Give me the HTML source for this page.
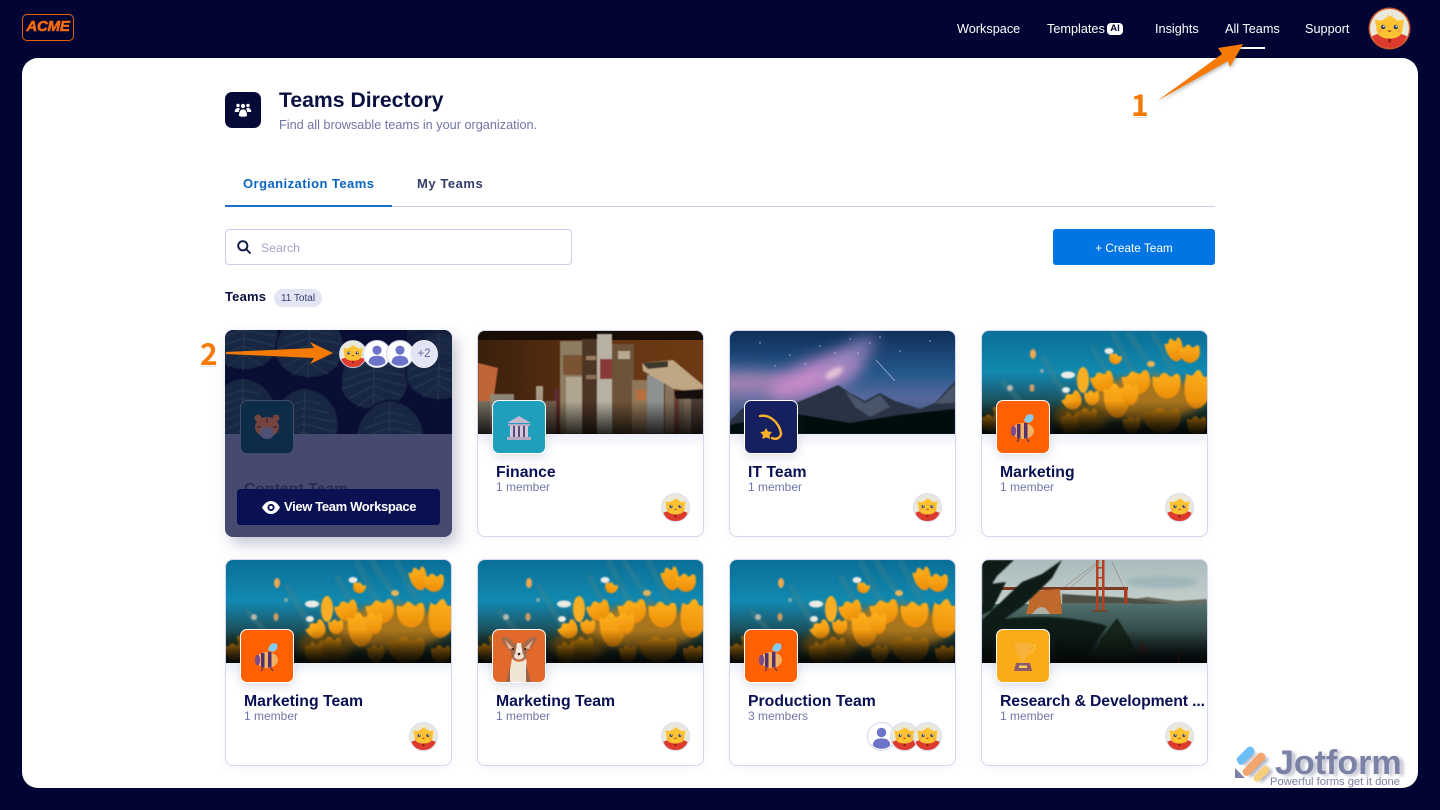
<!DOCTYPE html>
<html lang="en"><head><meta charset="utf-8"><title>Teams Directory</title>
<style>
*{box-sizing:border-box}
html,body{margin:0;padding:0;width:1440px;height:810px;overflow:hidden;background:#020534;font-family:"Liberation Sans",sans-serif}
.a{position:absolute}
.nav{position:absolute;top:21px;color:#fff;font-size:12.7px;line-height:16px;white-space:nowrap}
.main{position:absolute;left:22px;top:58px;width:1396px;height:730px;background:#fff;border-radius:16px}
.card{position:absolute;width:227px;height:207px;background:#fff;border:1px solid #d3d7f0;border-radius:8px;box-shadow:0 2px 10px rgba(90,100,170,.06);overflow:hidden}
.card svg.b{position:absolute;left:0;top:0;width:225px;height:103px;display:block}
.sh{position:absolute;left:0;top:103px;width:225px;height:14px;background:linear-gradient(#eef0f8,#fff)}
.ico{position:absolute;left:14px;top:69px;width:54px;height:54px;border:1px solid #fff;border-radius:7px;overflow:hidden;box-shadow:0 3px 10px rgba(60,70,130,.18)}
.ico svg{display:block;width:52px;height:52px}
.t{position:absolute;left:18px;top:132px;font-size:15.8px;line-height:20px;font-weight:bold;color:#0a1153;white-space:nowrap}
.s{position:absolute;left:18px;top:149px;font-size:12px;line-height:14px;color:#6f76a7;white-space:nowrap}
.av{position:absolute;width:29px;height:29px}
.num{position:absolute;font-family:"Noto Sans CJK JP","Liberation Sans",sans-serif;font-size:30px;font-weight:700;line-height:32px;color:#f57a05;text-shadow:-1px 0 #fff,1px 0 #fff,0 -1px #fff,0 1px #fff,-1px 1px #e8e8e8,0 2px #e2e2e2}
</style></head><body>
<svg width="0" height="0" style="position:absolute">
<defs>
<filter id="bl05" x="-30%" y="-30%" width="160%" height="160%"><feGaussianBlur stdDeviation=".5"/></filter>
<filter id="bl1" x="-30%" y="-30%" width="160%" height="160%"><feGaussianBlur stdDeviation=".8"/></filter>
<filter id="bl2" x="-50%" y="-50%" width="200%" height="200%"><feGaussianBlur stdDeviation="2"/></filter>
<filter id="bl4" x="-50%" y="-80%" width="200%" height="260%"><feGaussianBlur stdDeviation="4"/></filter>
<filter id="bl6" x="-100%" y="-200%" width="300%" height="500%"><feGaussianBlur stdDeviation="8"/></filter>
<filter id="sd" x="-20%" y="-20%" width="140%" height="150%"><feGaussianBlur stdDeviation="1.6"/></filter>
<linearGradient id="sky" x1="0" y1="0" x2="0" y2="1"><stop offset="0" stop-color="#0a6f98"/><stop offset=".4" stop-color="#1189b0"/><stop offset=".6" stop-color="#1a6177"/><stop offset=".8" stop-color="#1c3a34"/><stop offset="1" stop-color="#0e1c18"/></linearGradient>
<linearGradient id="fade" x1="0" y1="0" x2="0" y2="1"><stop offset=".68" stop-color="#000" stop-opacity="0"/><stop offset="1" stop-color="#000" stop-opacity=".8"/></linearGradient>
<linearGradient id="ngt" x1="0" y1="0" x2="0" y2="1"><stop offset="0" stop-color="#0f2f58"/><stop offset=".4" stop-color="#24568a"/><stop offset=".65" stop-color="#56699c"/><stop offset="1" stop-color="#39496a"/></linearGradient>
<linearGradient id="brg" x1="0" y1="0" x2="0" y2="1"><stop offset="0" stop-color="#a9bcbd"/><stop offset="1" stop-color="#c6d0cd"/></linearGradient>
<linearGradient id="wat" x1="0" y1="0" x2="0" y2="1"><stop offset="0" stop-color="#52706d"/><stop offset=".6" stop-color="#2a403f"/><stop offset="1" stop-color="#0b1414"/></linearGradient>
<linearGradient id="tg" x1="0" y1="0" x2="0" y2="1"><stop offset="0" stop-color="#fdb01c"/><stop offset="1" stop-color="#ec8c08"/></linearGradient>
<linearGradient id="tg2" x1="0" y1="0" x2="0" y2="1"><stop offset="0" stop-color="#d98b0e"/><stop offset="1" stop-color="#4a3a12"/></linearGradient>
<linearGradient id="wd" x1="0" y1="0" x2="1" y2="0"><stop offset="0" stop-color="#3a1f0c"/><stop offset=".6" stop-color="#653512"/><stop offset="1" stop-color="#6d3a14"/></linearGradient>
<path id="tp" d="M-11 -8Q-6 -6 -5 -9Q-2 -13 1 -9Q4 -6 6 -10Q9 -11 10 -8Q12 4 5 9Q0 12 -5 9Q-12 4 -11 -8Z" fill="url(#tg)"/>
<path id="td" d="M-11 -8Q-6 -6 -5 -9Q-2 -13 1 -9Q4 -6 6 -10Q9 -11 10 -8Q12 4 5 9Q0 12 -5 9Q-12 4 -11 -8Z" fill="url(#tg2)"/>
<symbol id="cat" viewBox="0 0 40 40">
<circle cx="20" cy="20" r="20" fill="#e9e8da"/>
<path d="M2 28 Q9 24 20 25 Q31 24 38 28 Q33 40 20 40 Q7 40 2 28Z" fill="#dc3b2d"/>
<path d="M5 11 L12 12 Q15 9 18 9 L18 6 L21 8 L23 6 L23 9 Q26 9 28 12 L35 11 L33.500 19 Q34 30 20 30.500 Q6 30 6.500 19Z" fill="#fcc232"/>
<circle cx="13.500" cy="18.500" r="2.300" fill="#3a3f6b"/><circle cx="26.500" cy="18.500" r="2.300" fill="#3a3f6b"/>
<circle cx="14.200" cy="17.800" r=".9" fill="#fff"/><circle cx="27.200" cy="17.800" r=".9" fill="#fff"/>
<path d="M17.500 22 Q20 25 22.500 22Z" fill="#8a3a1c"/>
<circle cx="10" cy="22.500" r="1.500" fill="#f6a645"/><circle cx="30" cy="22.500" r="1.500" fill="#f6a645"/>
<path d="M18 30.500h4l-1 4h-2z" fill="#9a2015"/>
</symbol>
<symbol id="usr" viewBox="0 0 40 40">
<circle cx="20" cy="20" r="19.300" fill="#fff" stroke="#d3d7f0" stroke-width="1.400"/>
<circle cx="20" cy="14.500" r="6.500" fill="#6c73c8"/>
<path d="M8 32.500 C8 25 13 22.500 20 22.500 C27 22.500 32 25 32 32.500 Q27 37 20 37 Q13 37 8 32.500Z" fill="#6c73c8"/>
</symbol>
<symbol id="catb" viewBox="0 0 42 42">
<circle cx="21" cy="21" r="20.200" fill="#fff" stroke="#d3d7f0" stroke-width="1.400"/>
<svg x="1.500" y="1.500" width="39" height="39" viewBox="0 0 40 40"><use href="#cat"/></svg>
</symbol>
<symbol id="flw" viewBox="0 0 225 103" preserveAspectRatio="none">
<rect width="225" height="103" fill="url(#sky)"/>
<g filter="url(#bl2)" stroke="#4d8486" stroke-width="2.500" opacity=".8" fill="none"><path d="M130 0L165 70M145 0L185 60M170 0L190 40M60 25L95 85M20 50L60 95M90 40L120 90M110 15L135 60"/></g>
<g filter="url(#bl4)"><ellipse cx="165" cy="68" rx="55" ry="22" fill="#a8741a"/><ellipse cx="100" cy="86" rx="28" ry="14" fill="#7c5c18"/><ellipse cx="30" cy="92" rx="30" ry="12" fill="#3b3c1e"/></g>
<g filter="url(#bl1)">
<g fill="#ecece6"><ellipse cx="86" cy="44" rx="7" ry="3.500"/><ellipse cx="127" cy="20" rx="4.500" ry="3"/><ellipse cx="84" cy="59" rx="4" ry="3"/><ellipse cx="28" cy="57" rx="3" ry="3" fill="#b8b8b0"/><ellipse cx="60" cy="40" rx="2" ry="2" fill="#8fa8a8"/></g>
<ellipse cx="51" cy="23" rx="3" ry="5" fill="#f0a850"/><ellipse cx="50" cy="57" rx="2.500" ry="4" fill="#d09a60"/><ellipse cx="169" cy="33" rx="4" ry="3" fill="#e9b45a"/>
<use href="#td" transform="translate(105 88)"/><use href="#td" transform="translate(88 93) scale(.8 1)"/><use href="#td" transform="translate(181 90) scale(1.700 1.200)"/><use href="#td" transform="translate(150 94) scale(.8)"/><use href="#td" transform="translate(215 95) scale(.9)"/><use href="#td" transform="translate(20 82) scale(.8)"/><use href="#td" transform="translate(8 92) scale(.8)"/>
<use href="#tp" transform="translate(91 70) rotate(-30) scale(.9 .8)"/><use href="#tp" transform="translate(110 67) scale(.7)"/>
<ellipse cx="101" cy="49" rx="6" ry="13" fill="#f8ae20"/>
<use href="#tp" transform="translate(193 19) rotate(-15) scale(.8 1.100)"/><use href="#tp" transform="translate(208 23) scale(.95 .85)"/><use href="#tp" transform="translate(133 28) rotate(25) scale(.6 .5)"/>
<use href="#tp" transform="translate(121 51) rotate(-15) scale(1.050 .95)"/><use href="#tp" transform="translate(155 52) rotate(-10) scale(1.300 1.100)"/><use href="#tp" transform="translate(185 55) scale(1.300 1.200)"/><use href="#tp" transform="translate(216 59) rotate(10) scale(1.300 1.800)"/><use href="#tp" transform="translate(135 70) scale(1.200 1.600)"/><use href="#tp" transform="translate(148 64) scale(.8 1)"/>
</g>
<rect width="225" height="103" fill="url(#fade)"/>
</symbol>
<symbol id="bks" viewBox="0 0 225 103" preserveAspectRatio="none">
<rect width="225" height="103" fill="url(#wd)"/>
<rect width="225" height="9" fill="#180d05"/>
<g filter="url(#bl05)">
<path d="M0 32L20 37L15 72L0 70Z" fill="#c06538"/>
<rect x="58" y="55" width="7" height="48" fill="#a79a88"/>
<rect x="76" y="58" width="5" height="45" fill="#5e2c30"/>
<rect x="0" y="70" width="12" height="33" fill="#77705f"/>
<rect x="12" y="63" width="24" height="40" fill="#8f8776"/>
<rect x="36" y="72" width="22" height="31" fill="#6f6656"/>
<rect x="66" y="70" width="12" height="33" fill="#6f604c"/>
<rect x="82" y="10" width="27" height="93" fill="#8d7b62"/>
<rect x="88" y="46" width="20" height="57" fill="#b0a690"/>
<rect x="85" y="24" width="22" height="20" fill="#7a5230"/>
<rect x="104" y="8" width="18" height="95" fill="#4e3427"/>
<rect x="108" y="25" width="10" height="4" fill="#9a7d63"/><rect x="108" y="44" width="10" height="4" fill="#8c6f56"/>
<rect x="119" y="3" width="15" height="100" fill="#b8b1a2"/>
<rect x="122" y="28" width="12" height="20" fill="#8a3838"/>
<rect x="134" y="13" width="22" height="90" fill="#6d5239"/>
<rect x="140" y="20" width="12" height="8" fill="#b6aa90"/>
<rect x="154" y="49" width="15" height="54" fill="#927659"/>
<rect x="158" y="59" width="10" height="10" fill="#b86f3e"/>
<rect x="169" y="44" width="17" height="59" fill="#8d9290"/>
<rect x="187" y="53" width="9" height="50" fill="#84725e"/>
<rect x="196" y="66" width="5" height="37" fill="#6a3b30"/>
<rect x="201" y="66" width="5" height="37" fill="#6a5c4d"/>
<rect x="206" y="66" width="7" height="37" fill="#7c6856"/>
<rect x="213" y="66" width="12" height="37" fill="#4c3b30"/>
<path d="M164 32L195 29L225 54V62L196 58L165 40Z" fill="#bfa784"/>
<path d="M164 32L190 30V36L170 38Z" fill="#3d372c"/>
<path d="M196 60L225 58V68H198Z" fill="#120e09"/>
</g>
<rect width="225" height="103" fill="url(#fade)"/>
</symbol>
<symbol id="ngh" viewBox="0 0 225 103" preserveAspectRatio="none">
<rect width="225" height="103" fill="url(#ngt)"/>
<ellipse cx="10" cy="52" rx="55" ry="12" fill="#a583b4" filter="url(#bl6)"/>
<ellipse cx="85" cy="46" rx="50" ry="16" fill="#c78ac9" filter="url(#bl6)" transform="rotate(-20 85 46)"/>
<ellipse cx="118" cy="28" rx="34" ry="9" fill="#9a86c0" filter="url(#bl6)" transform="rotate(-38 118 28)"/>
<ellipse cx="104" cy="42" rx="10" ry="4" fill="#e8c4d8" filter="url(#bl2)" transform="rotate(-30 104 42)"/>
<path d="M146 29L165 50" stroke="#cdd6e6" stroke-width=".700" opacity=".8"/>
<g fill="#dfe6f2"><circle cx="30" cy="12" r=".6"/><circle cx="60" cy="24" r=".6"/><circle cx="90" cy="15" r=".6"/><circle cx="140" cy="12" r=".6"/><circle cx="170" cy="20" r=".6"/><circle cx="200" cy="10" r=".6"/><circle cx="45" cy="35" r=".6"/><circle cx="120" cy="8" r=".6"/><circle cx="75" cy="33" r=".6"/><circle cx="150" cy="6" r=".6"/><circle cx="105" cy="22" r=".6"/><circle cx="128" cy="22" r=".6"/></g>
<path d="M0 103V90L12 78L26 70L45 75L65 72L90 62L108 54L120 62L135 70L150 62L165 70L190 78L205 72L225 50V103Z" fill="#2a3344" filter="url(#bl05)"/>
<path d="M115 60L135 72L150 64L160 76L140 86L125 76ZM205 73L225 53V72Z" fill="#4a5468" filter="url(#bl1)"/>
<path d="M0 103V94L60 82L120 92L170 84L225 78V103Z" fill="#05070c" filter="url(#bl05)"/>
</symbol>
<symbol id="brd" viewBox="0 0 225 103" preserveAspectRatio="none">
<rect width="225" height="46" fill="url(#brg)"/>
<ellipse cx="180" cy="22" rx="36" ry="6" fill="#9fb6b9" filter="url(#bl2)"/>
<path d="M148 40L165 37L195 41L225 39V46H150Z" fill="#666c5e" filter="url(#bl05)"/>
<path d="M80 34L148 38L190 44H80Z" fill="#4c5044" filter="url(#bl05)"/>
<rect y="44" width="225" height="59" fill="url(#wat)"/>
<path d="M80 29L118 0M130 2L145 34M118 2L88 28" stroke="#8c6b60" stroke-width=".5" fill="none"/>
<rect x="10" y="27" width="136" height="3" fill="#7c3a22"/>
<rect x="114" y="0" width="2.500" height="50" fill="#b5401f"/><rect x="120" y="0" width="2.500" height="50" fill="#b5401f"/>
<rect x="114" y="7" width="8.500" height="1.500" fill="#b5401f"/><rect x="114" y="17" width="8.500" height="1.500" fill="#b5401f"/><rect x="111" y="50" width="14" height="2" fill="#6d4a2e"/>
<rect x="142" y="28" width="3.500" height="16" fill="#a73f22"/>
<path d="M44 54L50 31L78 29L80 54Z" fill="#bf6a2c"/><path d="M50 54Q60 40 68 54Z" fill="#aeb1a5"/>
<g fill="#0f1a13" filter="url(#bl1)">
<path d="M0 0H32L15 16L0 40Z"/>
<path d="M0 60L40 22L60 14L80 0L70 18L42 45L0 75Z"/>
<path d="M0 103V62Q70 50 125 66L100 103Z"/>
<path d="M0 25L24 22L10 50L0 55Z"/>
</g>
<g fill="#18281d" filter="url(#bl05)"><path d="M135 58L118 80L112 103H155L150 82Z"/><path d="M158 92L160 80L164 92Z" fill="#4a2222"/><path d="M195 103L196 90L199 103Z" fill="#4a2222"/></g>
<rect y="0" width="225" height="103" fill="url(#fade)"/>
</symbol>
<symbol id="bee" viewBox="0 0 52 52">
<path d="M27 20 Q29 11 36 14 Q38 20 31 22Z" fill="#85caf2"/>
<ellipse cx="26" cy="30" rx="11" ry="8" fill="#f2b266"/>
<path d="M20 23h3.500v14.500h-3.500zM27 22h3.500v15.500h-3.500z" fill="#55306f"/>
<ellipse cx="16.500" cy="30" rx="2.600" ry="5.500" fill="#7d4a8c"/>
<path d="M22 38l-2 3M30 38l2 3" stroke="#55306f" stroke-width="1.200"/>
</symbol>
</defs>
</svg>

<div class="a" style="left:22px;top:14px;width:52px;height:27px;border:1.5px solid #e4600f;border-radius:5px"></div>
<div class="a" style="left:22px;top:17px;width:52px;text-align:center;color:#f26a10;font:italic bold 15px/20px 'Liberation Sans',sans-serif;-webkit-text-stroke:.6px #f26a10;letter-spacing:-.2px">ACME</div>

<div class="nav" style="left:957px">Workspace</div>
<div class="nav" style="left:1047px">Templates</div>
<div class="a" style="left:1107px;top:23px;width:16px;height:12px;background:#fff;border-radius:4px;color:#050a36;font:bold 9.5px/12px 'Liberation Sans',sans-serif;text-align:center">AI</div>
<div class="nav" style="left:1155px">Insights</div>
<div class="nav" style="left:1225px">All Teams</div>
<div class="a" style="left:1225px;top:47px;width:40px;height:2px;background:#fff"></div>
<div class="nav" style="left:1305px">Support</div>
<svg class="a" style="left:1368px;top:7px" width="43" height="43" viewBox="0 0 43 43"><circle cx="21.500" cy="21.500" r="21" fill="#c9582a"/><svg x="2" y="2" width="39" height="39" viewBox="0 0 40 40"><use href="#cat"/></svg></svg>

<div class="main"></div>

<div class="a" style="left:225px;top:92px;width:36px;height:36px;background:#050a36;border-radius:7px"></div>
<svg class="a" style="left:234px;top:101px" width="18" height="18" viewBox="0 0 18 18" fill="#fff"><circle cx="9" cy="5" r="2.100"/><circle cx="4" cy="4.500" r="1.700"/><circle cx="14" cy="4.500" r="1.700"/><path d="M.7 11Q1 7 4 7 5.400 7 6 7.800 4.800 9 4.700 11ZM17.300 11Q17 7 14 7 12.600 7 12 7.800 13.200 9 13.300 11Z"/><path d="M5 15Q5 8.400 9 8.400T13 15Q9 16.600 5 15Z"/></svg>
<div class="a" style="left:279px;top:88px;font-size:21.2px;line-height:26px;font-weight:bold;color:#0a1040;white-space:nowrap">Teams Directory</div>
<div class="a" style="left:279px;top:117px;font-size:12.7px;line-height:16px;color:#6f76a7;white-space:nowrap">Find all browsable teams in your organization.</div>

<div class="a" style="left:243px;top:176px;font-size:13px;line-height:16px;font-weight:bold;color:#0a66c2;letter-spacing:.45px;white-space:nowrap">Organization Teams</div>
<div class="a" style="left:417px;top:176px;font-size:13px;line-height:16px;font-weight:bold;color:#343c6a;letter-spacing:.55px;white-space:nowrap">My Teams</div>
<div class="a" style="left:225px;top:206px;width:990px;height:1px;background:#c8ceed"></div>
<div class="a" style="left:225px;top:205px;width:167px;height:2px;background:#1f6fc4"></div>

<div class="a" style="left:225px;top:229px;width:347px;height:36px;border:1px solid #c8ceed;border-radius:4px;background:#fff"></div>
<svg class="a" style="left:237px;top:240px" width="14" height="14" viewBox="0 0 14 14" fill="none" stroke="#0e1a40" stroke-width="1.900"><circle cx="5.800" cy="5.800" r="4.600"/><path d="M9.200 9.200L13 13" stroke-linecap="round"/></svg>
<div class="a" style="left:261px;top:240px;font-size:12.300px;line-height:16px;color:#a0a5c8">Search</div>
<div class="a" style="left:1053px;top:229px;width:162px;height:36px;background:#0075e3;border-radius:3px;color:#fff;font-size:11.800px;line-height:38px;text-align:center">+ Create Team</div>
<div class="a" style="left:225px;top:289px;font-size:13px;line-height:16px;font-weight:bold;color:#0a1040;letter-spacing:.2px">Teams</div>
<div class="a" style="left:274px;top:289px;width:48px;height:18px;border-radius:9px;background:#e3e5f5;color:#343c6a;font-size:10px;line-height:19px;text-align:center">11 Total</div>

<!-- Card 1 -->
<div class="a" style="left:225px;top:330px;width:227px;height:207px;border-radius:8px;overflow:hidden;background:#474a70;box-shadow:5px 7px 14px rgba(60,65,110,.3)">
<svg class="a" style="left:0;top:0" width="227" height="104" viewBox="0 0 227 104">
<rect width="227" height="104" fill="#0a1135"/>
<defs><g id="lf" fill="#1f2e47" stroke="#0a1135" stroke-width="1.500"><path d="M0 -36C28 -32 40 -6 30 16C20 36 -18 38 -32 16C-40 -6 -24 -34 0 -36Z"/><path d="M0 -34L-2 32M-1 -24L16 -20M-1 -16L24 -11M-1 -8L31 -2M-1 0L31 8M-2 8L27 18M-2 16L18 28M-1 -24L-16 -18M-1 -16L-25 -8M-1 -8L-31 2M-1 0L-33 11M-2 8L-27 21M-2 16L-18 29" fill="none" stroke="#34445c" stroke-width="1"/></g></defs>
<g filter="url(#bl05)"><use href="#lf" x="20" y="8"/><use href="#lf" x="85" y="16"/><use href="#lf" x="150" y="48"/><use href="#lf" x="215" y="38"/><use href="#lf" x="18" y="84"/><use href="#lf" x="215" y="0" opacity=".5"/><use href="#lf" x="80" y="94"/><use href="#lf" x="165" y="106"/></g>
<rect width="227" height="104" fill="#050a30" opacity=".2"/>
</svg>
<div class="a" style="left:15px;top:70px;width:54px;height:54px;border-radius:7px;border:1px solid #3f4f68;background:#0c2c47;overflow:hidden">
<svg width="52" height="52" viewBox="0 0 52 52"><circle cx="17" cy="17" r="3.500" fill="#75443f"/><circle cx="35" cy="17" r="3.500" fill="#75443f"/><ellipse cx="26" cy="26" rx="12" ry="10" fill="#75443f"/><ellipse cx="26" cy="32" rx="7" ry="6" fill="#4f5078"/><path d="M26 17v5M16 26h4M32 26h4" stroke="#3d2b3a" stroke-width="1.500"/></svg></div>
<div class="a" style="left:19px;top:150px;font-size:15.800px;line-height:20px;font-weight:bold;color:#2a2d52;white-space:nowrap">Content Team</div>
<div class="a" style="left:12px;top:159px;width:203px;height:36px;background:#0a1153;border-radius:3px"></div>
<svg class="a" style="left:37px;top:171px" width="18" height="13" viewBox="0 0 18 13"><path d="M0 6.500C3 1.500 6 0 9 0s6 1.500 9 6.500C15 11.500 12 13 9 13S3 11.500 0 6.500Z" fill="#fff"/><circle cx="9" cy="6.500" r="3.600" fill="#0a1153"/><circle cx="9" cy="6.500" r="1.700" fill="#fff"/></svg>
<div class="a" style="left:59px;top:169px;color:#fff;font-size:13px;line-height:16px;font-weight:bold;white-space:nowrap;letter-spacing:-.35px">View Team Workspace</div>
</div>
<svg class="a" style="left:339px;top:340px" width="28" height="28"><use href="#catb" width="28" height="28"/></svg>
<svg class="a" style="left:363px;top:340px" width="28" height="28"><use href="#usr" width="28" height="28"/></svg>
<svg class="a" style="left:386px;top:340px" width="28" height="28"><use href="#usr" width="28" height="28"/></svg>
<div class="a" style="left:410px;top:340px;width:28px;height:28px;border-radius:50%;background:#e3e5f5;border:1px solid #eef0fb;color:#5e659c;font-size:11.500px;line-height:26px;text-align:center">+2</div>

<!-- Row 1 -->
<div class="card" style="left:477px;top:330px"><svg class="b"><use href="#bks" width="225" height="103"/></svg><div class="sh"></div>
<div class="ico" style="background:#1f9fbb"><svg viewBox="0 0 52 52"><path d="M14 22L26 15L38 22Z" fill="#c7b8d2"/><rect x="15" y="23" width="22" height="2" fill="#b7a8c4"/><path d="M17 25h3v11h-3zM22 25h3v11h-3zM27 25h3v11h-3zM32 25h3v11h-3z" fill="#d3c8dc"/><path d="M20 25h2v11h-2zM25 25h2v11h-2zM30 25h2v11h-2z" fill="#5b4a7a"/><rect x="14" y="36" width="24" height="3" fill="#b7a8c4"/></svg></div>
<div class="t">Finance</div><div class="s">1 member</div><svg class="av" style="left:183px;top:162px"><use href="#catb" width="29" height="29"/></svg></div>

<div class="card" style="left:729px;top:330px"><svg class="b"><use href="#ngh" width="225" height="103"/></svg><div class="sh"></div>
<div class="ico" style="background:#17205f"><svg viewBox="0 0 52 52"><path d="M15 15C24 13 34 21 36 32C36 37 31 39 27 37" fill="none" stroke="#fbb129" stroke-width="2.400" stroke-linecap="round"/><path d="M21 27l2 3.500 4 .5-2.500 3 .5 4-3.800-1.600-3.700 1.700.4-4-2.700-3 4-.7Z" fill="#fbb129"/></svg></div>
<div class="t">IT Team</div><div class="s">1 member</div><svg class="av" style="left:183px;top:162px"><use href="#catb" width="29" height="29"/></svg></div>

<div class="card" style="left:981px;top:330px"><svg class="b"><use href="#flw" width="225" height="103"/></svg><div class="sh"></div>
<div class="ico" style="background:#ff6100"><svg><use href="#bee" width="52" height="52"/></svg></div>
<div class="t">Marketing</div><div class="s">1 member</div><svg class="av" style="left:183px;top:162px"><use href="#catb" width="29" height="29"/></svg></div>

<!-- Row 2 -->
<div class="card" style="left:225px;top:559px"><svg class="b"><use href="#flw" width="225" height="103"/></svg><div class="sh"></div>
<div class="ico" style="background:#ff6100"><svg><use href="#bee" width="52" height="52"/></svg></div>
<div class="t">Marketing Team</div><div class="s">1 member</div><svg class="av" style="left:183px;top:162px"><use href="#catb" width="29" height="29"/></svg></div>

<div class="card" style="left:477px;top:559px"><svg class="b"><use href="#flw" width="225" height="103"/></svg><div class="sh"></div>
<div class="ico" style="background:#e2692c"><svg viewBox="0 0 52 52"><path d="M18 22C8 12 7 7 10 7C15 7 19 10 21 14H31C33 10 37 7 42 7C45 7 44 12 34 22L33 30H19Z" fill="#a5694c"/><path d="M12 10L20 18L16 19ZM40 10L32 18L36 19Z" fill="#e9b9a0"/><path d="M19 28C22 33 30 33 33 28L36 52H15Z" fill="#f0e4d4"/><path d="M24 13H28L30 26H22Z" fill="#f5ebdc"/><ellipse cx="26" cy="26" rx="5" ry="3.500" fill="#f0dfd0"/><circle cx="26" cy="24" r="1.300" fill="#2b1b14"/><circle cx="20" cy="19" r="1" fill="#2b1b14"/><circle cx="32" cy="19" r="1" fill="#2b1b14"/><path d="M33 33L38 52H33ZM17 36L13 52H17Z" fill="#9c6244"/></svg></div>
<div class="t">Marketing Team</div><div class="s">1 member</div><svg class="av" style="left:183px;top:162px"><use href="#catb" width="29" height="29"/></svg></div>

<div class="card" style="left:729px;top:559px"><svg class="b"><use href="#flw" width="225" height="103"/></svg><div class="sh"></div>
<div class="ico" style="background:#ff6100"><svg><use href="#bee" width="52" height="52"/></svg></div>
<div class="t">Production Team</div><div class="s">3 members</div>
<svg class="av" style="left:137px;top:162px"><use href="#usr" width="29" height="29"/></svg><svg class="av" style="left:160px;top:162px"><use href="#catb" width="29" height="29"/></svg><svg class="av" style="left:183px;top:162px"><use href="#catb" width="29" height="29"/></svg></div>

<div class="card" style="left:981px;top:559px"><svg class="b"><use href="#brd" width="225" height="103"/></svg><div class="sh"></div>
<div class="ico" style="background:#fbab18"><svg viewBox="0 0 52 52"><path d="M18 13H34C34 22 31 27 28 28V33H24V28C21 27 18 22 18 13Z" fill="#f7b23c"/><path d="M34 15H38C38 20 36 22 33 23" fill="none" stroke="#f7c04a" stroke-width="1.500"/><path d="M19 33H33L35 41H17Z" fill="#8d5a6b"/><rect x="22" y="35.500" width="8" height="2.500" fill="#f8cf5b"/></svg></div>
<div class="t" style="letter-spacing:-.12px">Research &amp; Development ...</div><div class="s">1 member</div><svg class="av" style="left:183px;top:162px"><use href="#catb" width="29" height="29"/></svg></div>

<!-- Watermark -->
<svg class="a" style="left:1232px;top:742px" width="182" height="48" viewBox="0 0 182 48">
<g filter="url(#sd)" opacity=".45" transform="translate(3 3)" fill="#555a80"><path d="M5 16L17 5 22 9 10 21ZM11 28L29 10 34 15 16 33ZM22 33L33 22 38 27 27 38Z"/></g>
<path d="M5 16L15 6Q18 3 21 6T21 12L11 22Q8 24 6 21T5 16Z" fill="#6dc0f7"/>
<path d="M11 28L26 12Q29 9 32 12T32 18L17 33Q14 35 12 33T11 28Z" fill="#f3a56c"/>
<path d="M22 34L31 25Q34 22 36 25T36 31L28 38Q25 41 23 39T22 34Z" fill="#f6cf78"/>
<path d="M3 26L13 36H3Z" fill="#7d83a8"/>
<text x="45" y="32" font-family="Liberation Sans" font-size="34" font-weight="bold" fill="#555a80" opacity=".35" filter="url(#sd)" transform="translate(2 2)">Jotform</text>
<text x="43" y="32" font-family="Liberation Sans" font-size="34" font-weight="bold" fill="#7c82a6">Jotform</text>
<text x="38" y="43" font-family="Liberation Sans" font-size="11.200" fill="#7b7f9f">Powerful forms get it done</text>
</svg>

<!-- Arrows -->
<svg class="a" style="left:0;top:0" width="1440" height="810" viewBox="0 0 1440 810">
<g filter="url(#sd)" opacity=".3" fill="#333" transform="translate(1 2)"><polygon points="1157,101 1222,54 1218,48 1243,44 1230,67 1228,61"/><polygon points="226,352 314,348 310,342 333,353 310,364 314,358 226,354"/></g>
<polygon points="1157,101 1222,54 1218,48 1243,44 1230,67 1228,61" fill="#f57a05"/>
<polygon points="226,352 314,348 310,342 333,353 310,364 314,358 226,354" fill="#f57a05"/>
</svg>
<div class="num" style="left:1131px;top:87px">1</div>
<div class="num" style="left:200px;top:336px">2</div>
</body></html>
